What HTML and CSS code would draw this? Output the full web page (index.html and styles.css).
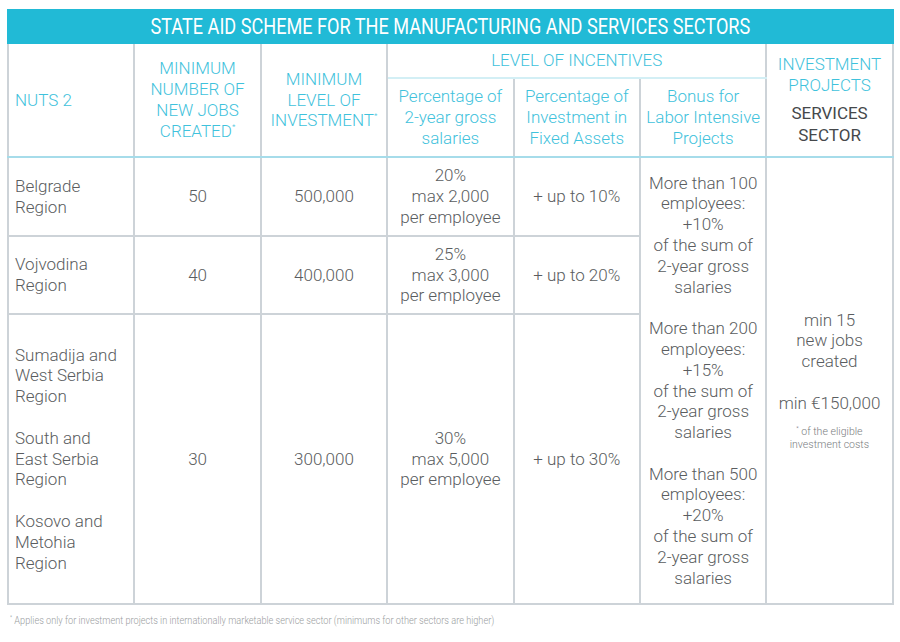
FILE: index.html
```html
<!DOCTYPE html>
<html lang="en">
<head>
<meta charset="utf-8">
<title>State Aid Scheme</title>
<link rel="stylesheet" href="styles.css">
</head>
<body>
<div class="page">
  <table class="aid">
    <colgroup>
      <col class="c"><col class="c"><col class="c"><col class="c"><col class="c"><col class="c"><col class="c">
    </colgroup>
    <thead>
      <tr class="title-row">
        <th colspan="7" class="title"><span class="cond">STATE AID SCHEME FOR THE MANUFACTURING AND SERVICES SECTORS</span></th>
      </tr>
      <tr class="head-top">
        <th rowspan="2" class="h h-left">NUTS 2</th>
        <th rowspan="2" class="h">MINIMUM<br>NUMBER OF<br>NEW JOBS<br>CREATED<sup>*</sup></th>
        <th rowspan="2" class="h">MINIMUM<br>LEVEL OF<br>INVESTMENT<sup>*</sup></th>
        <th colspan="3" class="h h-group">LEVEL OF INCENTIVES</th>
        <th rowspan="2" class="h h-last">
          <div>INVESTMENT<br>PROJECTS</div>
          <div class="sector">SERVICES<br>SECTOR</div>
        </th>
      </tr>
      <tr class="head-sub">
        <th class="h h-mixed">Percentage of<br>2-year gross<br>salaries</th>
        <th class="h h-mixed">Percentage of<br>Investment in<br>Fixed Assets</th>
        <th class="h h-mixed">Bonus for<br>Labor Intensive<br>Projects</th>
      </tr>
    </thead>
    <tbody>
      <tr class="r1">
        <td class="region">Belgrade<br>Region</td>
        <td>50</td>
        <td>500,000</td>
        <td>20%<br>max 2,000<br>per employee</td>
        <td>+ up to 10%</td>
        <td rowspan="3" class="bonus">
          <p>More than 100<br>employees:<br>+10%<br>of the sum of<br>2-year gross<br>salaries</p>
          <p>More than 200<br>employees:<br>+15%<br>of the sum of<br>2-year gross<br>salaries</p>
          <p>More than 500<br>employees:<br>+20%<br>of the sum of<br>2-year gross<br>salaries</p>
        </td>
        <td rowspan="3" class="services">
          <p>min 15<br>new jobs<br>created</p>
          <p>min €150,000</p>
          <p class="tiny"><span class="cond-s"><sup>*</sup> of the eligible<br>investment costs</span></p>
        </td>
      </tr>
      <tr class="r2">
        <td class="region">Vojvodina<br>Region</td>
        <td>40</td>
        <td>400,000</td>
        <td>25%<br>max 3,000<br>per employee</td>
        <td>+ up to 20%</td>
      </tr>
      <tr class="r3">
        <td class="region">
          <p>Sumadija and<br>West Serbia<br>Region</p>
          <p>South and<br>East Serbia<br>Region</p>
          <p>Kosovo and<br>Metohia<br>Region</p>
        </td>
        <td>30</td>
        <td>300,000</td>
        <td>30%<br>max 5,000<br>per employee</td>
        <td>+ up to 30%</td>
      </tr>
    </tbody>
  </table>
  <p class="footnote"><span class="cond-f"><sup>*</sup> Applies only for investment projects in internationally marketable service sector (minimums for other sectors are higher)</span></p>
</div>
</body>
</html>
```

FILE: styles.css
```css
html, body {
  margin: 0;
  padding: 0;
  background: #ffffff;
}

body {
  font-family: Roboto, "Open Sans", sans-serif;
  font-weight: 300;
  color: #5a5d60;
}

.page {
  padding: 9px 8px 0 7px;
}

.aid {
  width: 885px;
  border-collapse: collapse;
  table-layout: fixed;
  font-size: 17px;
  line-height: 20.8px;
}

.c {
  width: 126.4px;
}

.aid th,
.aid td {
  border: 2px solid #cdd3d8;
  padding: 0 4px;
  text-align: center;
  vertical-align: middle;
}

.title-row .title {
  background: #21bad6;
  color: #ffffff;
  height: 31px;
  padding: 0;
  font-size: 22px;
  font-weight: 400;
  line-height: 31px;
  border: 2px solid #21bad6;
  white-space: nowrap;
  overflow: hidden;
}

.cond {
  display: inline-block;
  transform: scaleX(0.823);
  transform-origin: center;
  white-space: nowrap;
}

.h {
  font-weight: 300;
  color: #3fc2dc;
}

.head-top .h {
  border-top-color: #21bad6;
}

.head-sub .h,
.head-top .h[rowspan] {
  border-bottom-color: #a6dcea;
}

.head-top {
  height: 35px;
}

.head-sub {
  height: 79px;
}

.h-group {
  border-bottom: 2px solid #d3eff5 !important;
  padding-top: 0;
}

.h-left {
  text-align: left !important;
  padding-left: 6px !important;
}

.h sup {
  font-size: 8px;
  vertical-align: top;
  line-height: 1;
  position: relative;
  top: 2px;
}

.sector {
  margin-top: 6px;
  color: #45484b;
  font-weight: 400;
  line-height: 22px;
}

.r1 { height: 79px; }
.r2 { height: 78px; }
.r3 { height: 290px; }

.aid td {
  color: #5a5d60;
}

.aid td.region {
  text-align: left;
  padding-left: 6px;
}

.aid td p {
  margin: 0;
}

.region p + p,
.bonus p + p {
  margin-top: 20.8px;
}

.services p + p {
  margin-top: 20.8px;
}

.services .tiny {
  margin-top: 12px;
  font-size: 11px;
  line-height: 13px;
  color: #7a7d80;
}

.cond-s {
  display: inline-block;
  transform: scaleX(0.96);
}

.tiny sup,
.footnote sup {
  font-size: 6px;
  vertical-align: top;
  line-height: 1;
}

.footnote {
  margin: 9px 0 0 3px;
  font-size: 11px;
  line-height: 14px;
  color: #9a9da0;
  white-space: nowrap;
}

.cond-f {
  display: inline-block;
  transform: scaleX(0.835);
  transform-origin: left center;
}
```
